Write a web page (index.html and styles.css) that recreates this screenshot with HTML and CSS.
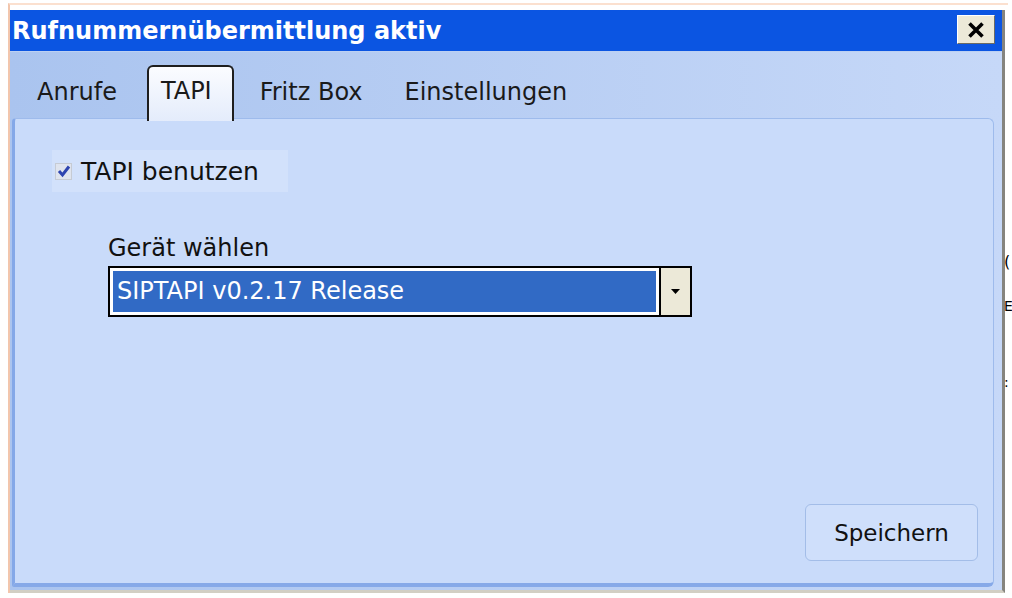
FILE: index.html
```html
<!DOCTYPE html>
<html lang="de">
<head>
  <meta charset="UTF-8" />
  <title>Rufnummernübermittlung aktiv</title>
  <link rel="stylesheet" href="styles.css">
</head>
<body>

  <div class="frame">
    <div class="fenster">
      <div class="titelleiste">
        <span class="titel">Rufnummernübermittlung aktiv</span>
        <button class="schliessen">
          <svg width="18" height="16" viewBox="0 0 18 16"><path d="M2.5 1.5 L15.5 14.5 M15.5 1.5 L2.5 14.5" stroke="#000" stroke-width="3.6"/></svg>
        </button>
      </div>

      <div class="tabs">
        <span class="tab">Anrufe</span>
        <span class="tab aktiv">TAPI</span>
        <span class="tab fritz">Fritz Box</span>
        <span class="tab">Einstellungen</span>
      </div>

      <div class="panel">
        <label class="checkbox">
          <span class="box">
            <svg class="haken" viewBox="0 0 14 14"><path d="M2 7 L5.5 11 L12 2.5" fill="none" stroke="#2d44b0" stroke-width="3"/></svg>
          </span>
          TAPI benutzen
        </label>

        <div class="feld">
          <div class="feld-label">Gerät wählen</div>
          <div class="auswahl">
            <div class="auswahl-wert"><span>SIPTAPI v0.2.17 Release</span></div>
            <div class="auswahl-pfeil">
              <svg width="9" height="5" viewBox="0 0 9 5"><path d="M0 0 H9 L4.5 5 Z" fill="#000"/></svg>
            </div>
          </div>
        </div>

        <button class="btn-speichern">Speichern</button>
      </div>
    </div>
  </div>

  <!-- Reste vom Fenster dahinter -->
  <div class="dahinter">
    <span class="z1">(</span>
    <span class="z2">E</span>
    <span class="z3">:</span>
  </div>

</body>
</html>
```

FILE: styles.css
```css
* { box-sizing: border-box; }
body {
  margin: 0;
  background: #fff;
  font-family: 'DejaVu Sans', sans-serif;
  width: 1012px;
  height: 598px;
  overflow: hidden;
  position: relative;
}

.frame {
  margin: 3px 0 0 8px;
  width: 1000px;
  height: 590px;
  border-top: 2px solid #fbe0cf;
  border-left: 2px solid #f2c6ad;
  padding-top: 5px;
}

.fenster {
  width: 995px;
  height: 583px;
  border-right: 3px solid #85847f;
  border-bottom: 3px solid #d2cfc4;
  background: linear-gradient(90deg, #aac4ef, #c6d8f8);
  display: flex;
  flex-direction: column;
}

.titelleiste {
  height: 42px;
  background: #0b55e2;
  display: flex;
  align-items: center;
  justify-content: space-between;
  padding: 0 7px 0 2px;
  border-bottom: 1px solid #bcd0f2;
}
.titel {
  color: #fff;
  font-family: 'DejaVu Sans', sans-serif;
  font-weight: bold;
  font-size: 24px;
}
.schliessen {
  width: 38px;
  height: 29px;
  margin-top: -2px;
  background: #ece9d8;
  border: 1px solid #fff;
  border-right-color: #6b6a64;
  border-bottom-color: #6b6a64;
  display: flex;
  align-items: center;
  justify-content: center;
  padding: 0;
}

.tabs {
  height: 66px;
  display: flex;
  align-items: flex-end;
  padding-left: 27px;
  position: relative;
  z-index: 1;
}
.tab {
  font-size: 24px;
  color: #1a1a1a;
  height: 44px;
  line-height: 36px;
}
.tab.aktiv {
  height: 56px;
  line-height: 48px;
  margin: 0 26px 0 30px;
  padding: 0 20px 0 12px;
  background: linear-gradient(#fbfcff, #e4ecfb);
  border: 2px solid #1e1e1e;
  border-bottom: none;
  border-radius: 6px 6px 0 0;
  margin-bottom: -3px;
}
.tab.fritz {
  margin-right: 42px;
}

.panel {
  flex: 1;
  margin: 0 8px 3px 2px;
  background: #c9dbfa;
  border: 1px solid #9ebbec;
  border-left: 3px solid #84a8e8;
  border-bottom: 4px solid #86a9e8;
  border-radius: 4px 6px 6px 2px;
  display: flex;
  flex-direction: column;
  padding: 31px 15px 22px 37px;
}

.checkbox {
  display: flex;
  align-items: center;
  gap: 9px;
  font-size: 25px;
  color: #111;
  width: 236px;
  height: 42px;
  background: #d2e1fb;
  padding-left: 3px;
}
.box {
  width: 17px;
  height: 17px;
  background: #dfe4ee;
  border: 1px solid #c6cbd4;
  display: flex;
  align-items: center;
  justify-content: center;
}
.haken {
  width: 14px;
  height: 14px;
  flex: none;
}

.feld {
  margin: 42px 0 0 56px;
}
.feld-label {
  font-size: 24px;
  color: #111;
  margin-bottom: 4px;
}
.auswahl {
  width: 584px;
  height: 51px;
  border: 2px solid #000;
  background: #fff;
  display: flex;
}
.auswahl-wert {
  flex: 1;
  padding: 3px;
}
.auswahl-wert span {
  display: block;
  height: 100%;
  background: #316ac5;
  color: #fff;
  font-size: 24px;
  line-height: 40px;
  padding-left: 4px;
}
.auswahl-pfeil {
  width: 31px;
  background: #ece9d8;
  border-left: 2px solid #000;
  display: flex;
  align-items: center;
  justify-content: center;
}

.btn-speichern {
  margin-top: auto;
  align-self: flex-end;
  width: 173px;
  height: 57px;
  font-family: 'DejaVu Sans', sans-serif;
  font-size: 23px;
  color: #111;
  background: #cfdffb;
  border: 1px solid #a3bde8;
  border-radius: 6px;
}

.dahinter {
  position: absolute;
  left: 1004px;
  top: 252px;
  width: 8px;
  height: 140px;
  font-family: 'DejaVu Sans', sans-serif;
  font-size: 14px;
  color: #000;
}
.dahinter span {
  position: absolute;
  left: 0;
}
.z1 { top: 0; font-size: 16px; }
.z2 { top: 46px; }
.z3 { top: 122px; }
```
